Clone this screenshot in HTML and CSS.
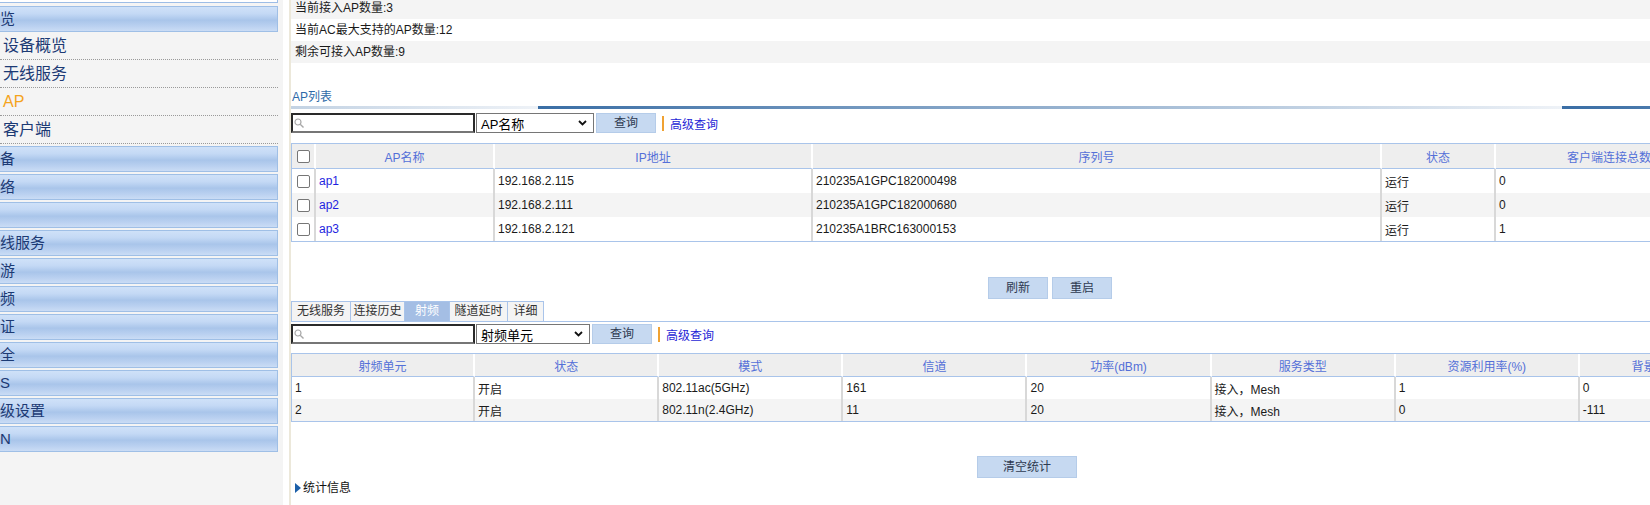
FILE: index.html
```html
<!DOCTYPE html>
<html lang="zh-CN">
<head>
<meta charset="utf-8">
<title>AP</title>
<link rel="stylesheet" href="styles.css">
</head>
<body>
<div class="page">
  <aside class="sidebar">
    <div class="top-box"></div>
    <div class="menu-head first">览</div>
    <div class="menu-items">
      <div class="item">设备概览</div>
      <div class="item">无线服务</div>
      <div class="item active">AP</div>
      <div class="item">客户端</div>
    </div>
    <div class="menu-head">备</div>
    <div class="menu-head">络</div>
    <div class="menu-head"></div>
    <div class="menu-head">线服务</div>
    <div class="menu-head">游</div>
    <div class="menu-head">频</div>
    <div class="menu-head">证</div>
    <div class="menu-head">全</div>
    <div class="menu-head">S</div>
    <div class="menu-head">级设置</div>
    <div class="menu-head">N</div>
  </aside>
  <div class="divider"></div>
  <main class="content">
    <div class="info-row alt">当前接入AP数量:3</div>
    <div class="info-row">当前AC最大支持的AP数量:12</div>
    <div class="info-row alt">剩余可接入AP数量:9</div>

    <div class="section-title">AP列表</div>
    <div class="title-bar"></div>

    <div class="search">
      <div class="search-input">
        <svg class="mag" width="11" height="11" viewBox="0 0 11 11"><circle cx="4" cy="4" r="3" fill="none" stroke="#a8a8a8" stroke-width="1.2"/><line x1="6.2" y1="6.2" x2="9.5" y2="9.5" stroke="#a8a8a8" stroke-width="1.4"/></svg>
      </div>
      <div class="select">
        <span>AP名称</span>
        <svg class="chev" width="9" height="6" viewBox="0 0 9 6"><polyline points="1,1 4.5,4.5 8,1" fill="none" stroke="#111" stroke-width="1.8"/></svg>
      </div>
      <div class="btn">查询</div>
      <div class="sep"></div>
      <a class="link">高级查询</a>
    </div>

    <table class="grid grid-ap">
      <thead>
        <tr>
          <th class="c-chk"><span class="chk"></span></th>
          <th class="c-name">AP名称</th>
          <th class="c-ip">IP地址</th>
          <th class="c-sn">序列号</th>
          <th class="c-st">状态</th>
          <th class="c-cl">客户端连接总数</th>
        </tr>
      </thead>
      <tbody>
        <tr>
          <td class="chk-cell"><span class="chk"></span></td>
          <td><a class="ap-link">ap1</a></td>
          <td>192.168.2.115</td>
          <td>210235A1GPC182000498</td>
          <td>运行</td>
          <td>0</td>
        </tr>
        <tr class="alt">
          <td class="chk-cell"><span class="chk"></span></td>
          <td><a class="ap-link">ap2</a></td>
          <td>192.168.2.111</td>
          <td>210235A1GPC182000680</td>
          <td>运行</td>
          <td>0</td>
        </tr>
        <tr>
          <td class="chk-cell"><span class="chk"></span></td>
          <td><a class="ap-link">ap3</a></td>
          <td>192.168.2.121</td>
          <td>210235A1BRC163000153</td>
          <td>运行</td>
          <td>1</td>
        </tr>
      </tbody>
    </table>

    <div class="actions">
      <div class="btn btn-md">刷新</div>
      <div class="btn btn-md">重启</div>
    </div>

    <div class="tabs">
      <div class="tab tab-1">无线服务</div>
      <div class="tab tab-2">连接历史</div>
      <div class="tab tab-3 active">射频</div>
      <div class="tab tab-4">隧道延时</div>
      <div class="tab tab-5">详细</div>
    </div>

    <div class="search search-2">
      <div class="search-input">
        <svg class="mag" width="11" height="11" viewBox="0 0 11 11"><circle cx="4" cy="4" r="3" fill="none" stroke="#a8a8a8" stroke-width="1.2"/><line x1="6.2" y1="6.2" x2="9.5" y2="9.5" stroke="#a8a8a8" stroke-width="1.4"/></svg>
      </div>
      <div class="select select-sm">
        <span>射频单元</span>
        <svg class="chev" width="9" height="6" viewBox="0 0 9 6"><polyline points="1,1 4.5,4.5 8,1" fill="none" stroke="#111" stroke-width="1.8"/></svg>
      </div>
      <div class="btn">查询</div>
      <div class="sep"></div>
      <a class="link">高级查询</a>
    </div>

    <table class="grid grid-radio">
      <thead>
        <tr>
          <th class="r-first">射频单元</th>
          <th class="r-col">状态</th>
          <th class="r-col">模式</th>
          <th class="r-col">信道</th>
          <th class="r-col">功率(dBm)</th>
          <th class="r-col">服务类型</th>
          <th class="r-col">资源利用率(%)</th>
          <th class="r-col">背景噪声(dBm)</th>
        </tr>
      </thead>
      <tbody>
        <tr>
          <td>1</td>
          <td>开启</td>
          <td>802.11ac(5GHz)</td>
          <td>161</td>
          <td>20</td>
          <td>接入，Mesh</td>
          <td>1</td>
          <td>0</td>
        </tr>
        <tr class="alt">
          <td>2</td>
          <td>开启</td>
          <td>802.11n(2.4GHz)</td>
          <td>11</td>
          <td>20</td>
          <td>接入，Mesh</td>
          <td>0</td>
          <td>-111</td>
        </tr>
      </tbody>
    </table>

    <div class="actions actions-clear">
      <div class="btn btn-lg">清空统计</div>
    </div>

    <div class="stats"><span class="tri"></span>统计信息</div>
  </main>
</div>
</body>
</html>
```
FILE: styles.css
```css
* { box-sizing: border-box; }
html, body { margin: 0; padding: 0; }
body {
  width: 1650px;
  height: 505px;
  overflow: hidden;
  background: #fff;
  font-family: "Liberation Sans", "Noto Sans CJK SC", sans-serif;
  font-size: 12px;
  color: #1a1a1a;
}
.page { display: flex; align-items: stretch; height: 505px; }

/* ---------- sidebar ---------- */
.sidebar {
  flex: none;
  width: 283px;
  background: #f4f4f4;
  padding-right: 5px;
}
.top-box {
  height: 3px;
  background: #fff;
  border-right: 1px solid #9dbde6;
  border-bottom: 1px solid #9dbde6;
}
.menu-head {
  height: 26px;
  margin-top: 2px;
  border: 1px solid #9fbfe6;
  border-left: 0;
  background: linear-gradient(to bottom, #cfe1f8 0%, #c4d9f5 28%, #a9c5ea 55%, #b9d0f0 78%, #cadcf5 100%);
  font-size: 15px;
  line-height: 24px;
  color: #1c3a74;
  white-space: nowrap;
  overflow: hidden;
}
.menu-head.first { margin-top: 3px; }
.item {
  height: 28px;
  line-height: 27px;
  border-bottom: 1px dotted #9a9a9a;
  padding-left: 3px;
  font-size: 16px;
  color: #1c3a74;
}
.item.active { color: #f5a31c; }

.divider {
  flex: none;
  width: 2px;
  margin-left: 6px;
  background: #ece8da;
}

/* ---------- content ---------- */
.content {
  flex: none;
  width: 1518px;
  margin-top: -3px;
}
.info-row {
  height: 22px;
  line-height: 22px;
  padding-left: 4px;
  white-space: nowrap;
}
.info-row.alt { background: #f4f4f4; }

.section-title {
  margin-top: 26px;
  height: 16px;
  line-height: 16px;
  padding-left: 1px;
  color: #2e6aa8;
}
.title-bar {
  margin-top: 1px;
  height: 3px;
  background-image: linear-gradient(to right, #3a6ea5, #eef2f7);
  background-size: 1024px 3px;
  background-position: 247px 0;
  background-repeat: repeat-x;
}

.search {
  display: flex;
  align-items: center;
  height: 20px;
  margin-top: 4px;
}
.search-2 { margin-top: 2px; }
.search-input {
  flex: none;
  width: 184px;
  height: 20px;
  border: 2px solid #2a2a2a;
  border-bottom-color: #767676;
  background: #fff;
  display: flex;
  align-items: center;
  padding-left: 1px;
}
.mag { display: block; }
.select {
  flex: none;
  width: 118px;
  height: 20px;
  margin-left: 1px;
  border: 1px solid #767676;
  background: #fff;
  display: flex;
  align-items: center;
  justify-content: space-between;
  padding: 0 6px 0 4px;
  font-size: 13px;
  color: #000;
  white-space: nowrap;
}
.select-sm { width: 114px; }
.chev { display: block; }
.btn {
  flex: none;
  width: 60px;
  height: 20px;
  margin-left: 2px;
  background: #c6d9f1;
  border: 1px solid #b5cce9;
  text-align: center;
  line-height: 18px;
  font-size: 12px;
  color: #2e3a50;
}
.sep {
  flex: none;
  width: 2px;
  height: 15px;
  margin-left: 6px;
  background: #f0a232;
}
.link {
  margin-left: 6px;
  color: #1f1fd6;
  white-space: nowrap;
}

/* ---------- tables ---------- */
.grid {
  table-layout: fixed;
  border-collapse: separate;
  border-spacing: 0;
  border: 1px solid #a9c4ea;
  margin-top: 10px;
}
.grid th {
  height: 25px;
  padding: 0;
  background: #eeeeee;
  border-bottom: 1px solid #a9c4ea;
  border-right: 2px solid #fff;
  font-weight: normal;
  color: #5470d8;
  text-align: center;
  white-space: nowrap;
  overflow: hidden;
}
.grid td {
  height: 24px;
  padding: 0 0 0 3px;
  border-right: 2px solid #d8d8d8;
  white-space: nowrap;
  overflow: hidden;
  background: #fff;
}
.grid tr.alt td { background: #f4f4f4; }
.grid th:last-child, .grid td:last-child { border-right: 0; }

.grid-ap { width: 1432px; }
.c-chk { width: 24px; }
.c-name { width: 179px; }
.c-ip { width: 318px; }
.c-sn { width: 569px; }
.c-st { width: 114px; }
.c-cl { width: 226px; }
.grid .chk-cell { padding: 0; text-align: center; }
.chk {
  display: inline-block;
  width: 13px;
  height: 13px;
  border: 1px solid #767676;
  border-radius: 2px;
  background: #fff;
  vertical-align: middle;
}
.ap-link { color: #1f1fe0; }

.grid-radio { width: 1474px; margin-top: 9px; }
.grid-radio th { height: 23px; }
.grid-radio td { height: 22px; }
.r-first { width: 183px; }
.r-col { width: 184px; }

.actions {
  display: flex;
  justify-content: center;
  gap: 4px;
  margin-top: 35px;
  width: 1518px;
}
.actions .btn { margin-left: 0; }
.btn-md { height: 22px; line-height: 20px; font-size: 12px; }
.actions-clear { width: 1472px; margin-top: 34px; }
.btn-lg { width: 100px; height: 22px; line-height: 20px; }

.tabs {
  display: flex;
  margin-top: 2px;
  height: 21px;
  border-bottom: 1px solid #a9c4ea;
}
.tab {
  height: 20px;
  border: 1px solid #a9c4ea;
  border-bottom: 0;
  border-right: 0;
  background: #f4f4f4;
  line-height: 19px;
  text-align: center;
  color: #333;
  white-space: nowrap;
}
.tab-5 { border-right: 1px solid #a9c4ea; }
.tab.active { background: #a4bee4; color: #fff; }
.tab-1 { width: 59px; }
.tab-2 { width: 54px; }
.tab-3 { width: 45px; }
.tab-4 { width: 58px; }
.tab-5 { width: 37px; }

.stats {
  display: flex;
  align-items: center;
  margin-top: 2px;
  height: 16px;
  line-height: 16px;
  padding-left: 4px;
  color: #111;
}
.tri {
  width: 0;
  height: 0;
  border-left: 6px solid #1b5fa9;
  border-top: 5px solid transparent;
  border-bottom: 5px solid transparent;
  margin-right: 2px;
}
```
